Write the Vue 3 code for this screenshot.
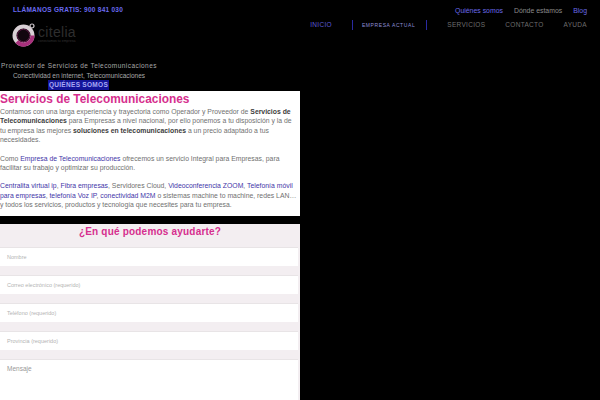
<script setup>
const topLinks = [
  { label: 'Quiénes somos', cls: 'blue' },
  { label: 'Dónde estamos', cls: 'grey' },
  { label: 'Blog', cls: 'blue' }
]
const fields = ['Nombre', 'Correo electrónico (requerido)', 'Teléfono (requerido)', 'Provincia (requerido)']
</script>

<template>
  <div class="page">
    <header class="header">
      <div class="brand">
        <p class="phone">LLÁMANOS GRATIS: 900 841 030</p>
        <div class="logo">
          <svg width="25" height="26" viewBox="0 0 25 26">
            <circle cx="11.5" cy="13.5" r="9" fill="#12060e" stroke="#d9d0d5" stroke-width="4" />
            <path d="M20.5 13.5a9 9 0 0 1-15.6 6.1" fill="none" stroke="#a8307c" stroke-width="4" />
            <circle cx="11.5" cy="13.5" r="6.2" fill="none" stroke="#5a1a44" stroke-width="1" />
            <circle cx="20" cy="4" r="2" fill="#000" stroke="#cfc8cc" stroke-width="1.2" />
          </svg>
          <div class="logo-text">
            <span class="logo-name">citelia</span>
            <span class="logo-sub">conectamos tu empresa</span>
          </div>
        </div>
      </div>
      <div class="navs">
        <nav class="top-nav">
          <a v-for="l in topLinks" :key="l.label" :class="l.cls">{{ l.label }}</a>
        </nav>
        <nav class="main-nav">
          <a class="blue">INICIO</a>
          <a class="active">EMPRESA ACTUAL</a>
          <a>SERVICIOS</a>
          <a>CONTACTO</a>
          <a>AYUDA</a>
        </nav>
      </div>
    </header>

    <div class="column">
      <section class="hero">
        <p class="line-wide">Proveedor de Servicios de Telecomunicaciones</p>
        <p>Conectividad en internet, Telecomunicaciones</p>
        <a class="hero-btn">QUIÉNES SOMOS</a>
      </section>

      <section class="intro">
        <h1>Servicios de Telecomunicaciones</h1>
        <p>Contamos con una larga experiencia y trayectoria como Operador y Proveedor de <b>Servicios de Telecomunicaciones</b> para Empresas a nivel nacional, por ello ponemos a tu disposición y la de tu empresa las mejores <b>soluciones en telecomunicaciones</b> a un precio adaptado a tus necesidades.</p>
        <p>Como <a>Empresa de Telecomunicaciones</a> ofrecemos un servicio Integral para Empresas, para facilitar su trabajo y optimizar su producción.</p>
        <p><a>Centralita virtual ip</a>, <a>Fibra empresas</a>, Servidores Cloud, <a>Videoconferencia ZOOM</a>, <a>Telefonía móvil para empresas</a>, <a>telefonía Voz IP</a>, <a>conectividad M2M</a> o sistemas machine to machine, redes LAN… y todos los servicios, productos y tecnología que necesites para tu empresa.</p>
      </section>

      <section class="contact">
        <h2>¿En qué podemos ayudarte?</h2>
        <div v-for="f in fields" :key="f" class="field">{{ f }}</div>
        <div class="field message">Mensaje</div>
      </section>
    </div>
  </div>
</template>

<style>
html, body { margin: 0; background: #000; overflow: hidden; }
</style>

<style scoped>
.page {
  width: 600px;
  height: 400px;
  overflow: hidden;
  background: #000;
  font-family: "Liberation Sans", Arial, sans-serif;
}
.header {
  display: flex;
  justify-content: space-between;
  height: 61px;
}
.phone {
  margin: 0;
  padding: 5px 0 0 13px;
  font-size: 6.5px;
  line-height: 9px;
  font-weight: 700;
  letter-spacing: 0.26px;
  color: #6a6af0;
}
.logo {
  display: flex;
  align-items: center;
  gap: 1px;
  padding: 8px 0 0 12px;
}
.logo-text { display: flex; flex-direction: column; }
.logo-name { font-size: 14px; line-height: 13px; color: #2e2e2e; letter-spacing: 0.3px; }
.logo-sub { font-size: 3.5px; line-height: 5px; color: #333; }
.navs {
  display: flex;
  flex-direction: column;
  align-items: flex-end;
  padding: 7px 13px 0 0;
  gap: 5px;
}
.top-nav { display: flex; gap: 11px; font-size: 6.9px; line-height: 8px; }
.top-nav .blue { color: #6a6ae8; }
.top-nav .grey { color: #8b8b8b; }
.main-nav {
  display: flex;
  align-items: center;
  gap: 20px;
  font-size: 6.5px;
  line-height: 10px;
  color: #6e6e6e;
  letter-spacing: 0.3px;
}
.main-nav .blue { color: #5a5ad8; }
.main-nav .active {
  color: #8f8fd8;
  border-left: 1px solid #2a2aa0;
  border-right: 1px solid #2a2aa0;
  padding: 0 11px 0 9px;
  font-size: 5px;
  letter-spacing: 0.6px;
}
.column { width: 300px; }
.hero {
  height: 30px;
  text-align: center;
  color: #a8a8a8;
  font-size: 6.5px;
  line-height: 10px;
  width: 158px;
}
.hero p { margin: 0; white-space: nowrap; }
.hero .line-wide { letter-spacing: 0.44px; }
.hero-btn {
  display: block;
  width: 61px;
  margin: -1px auto 0 48px;
  background: #14149a;
  color: #a9a9f5;
  font-size: 6.5px;
  line-height: 10px;
  font-weight: 700;
  letter-spacing: 0.3px;
  white-space: nowrap;
}
.intro {
  background: #fff;
  height: 125px;
  color: #707070;
  font-size: 6.85px;
  line-height: 9.4px;
  padding-right: 3px;
  box-sizing: border-box;
}
.intro h1 {
  margin: 0;
  font-size: 11.9px;
  line-height: 16px;
  color: #d62f8e;
  font-weight: 700;
}
.intro p { margin: 0 0 9px; }
.intro b { color: #3c3c3c; }
.intro a { color: #3f35a8; }
.contact {
  margin-top: 8px;
  background: #f3eef1;
  height: 180px;
}
.contact h2 {
  margin: 0;
  height: 23px;
  text-align: center;
  font-size: 10px;
  line-height: 15px;
  font-weight: 700;
  color: #d62f8e;
  letter-spacing: 0.2px;
}
.field {
  background: #fff;
  width: 298px;
  height: 19px;
  margin-bottom: 9px;
  padding-left: 7px;
  font-size: 5.5px;
  line-height: 19px;
  color: #b3b3b3;
  border-top: 1px solid #e8e4e6;
  box-sizing: border-box;
}
.field.message {
  height: 60px;
  font-size: 6.5px;
  line-height: 17px;
  color: #999;
}
</style>
